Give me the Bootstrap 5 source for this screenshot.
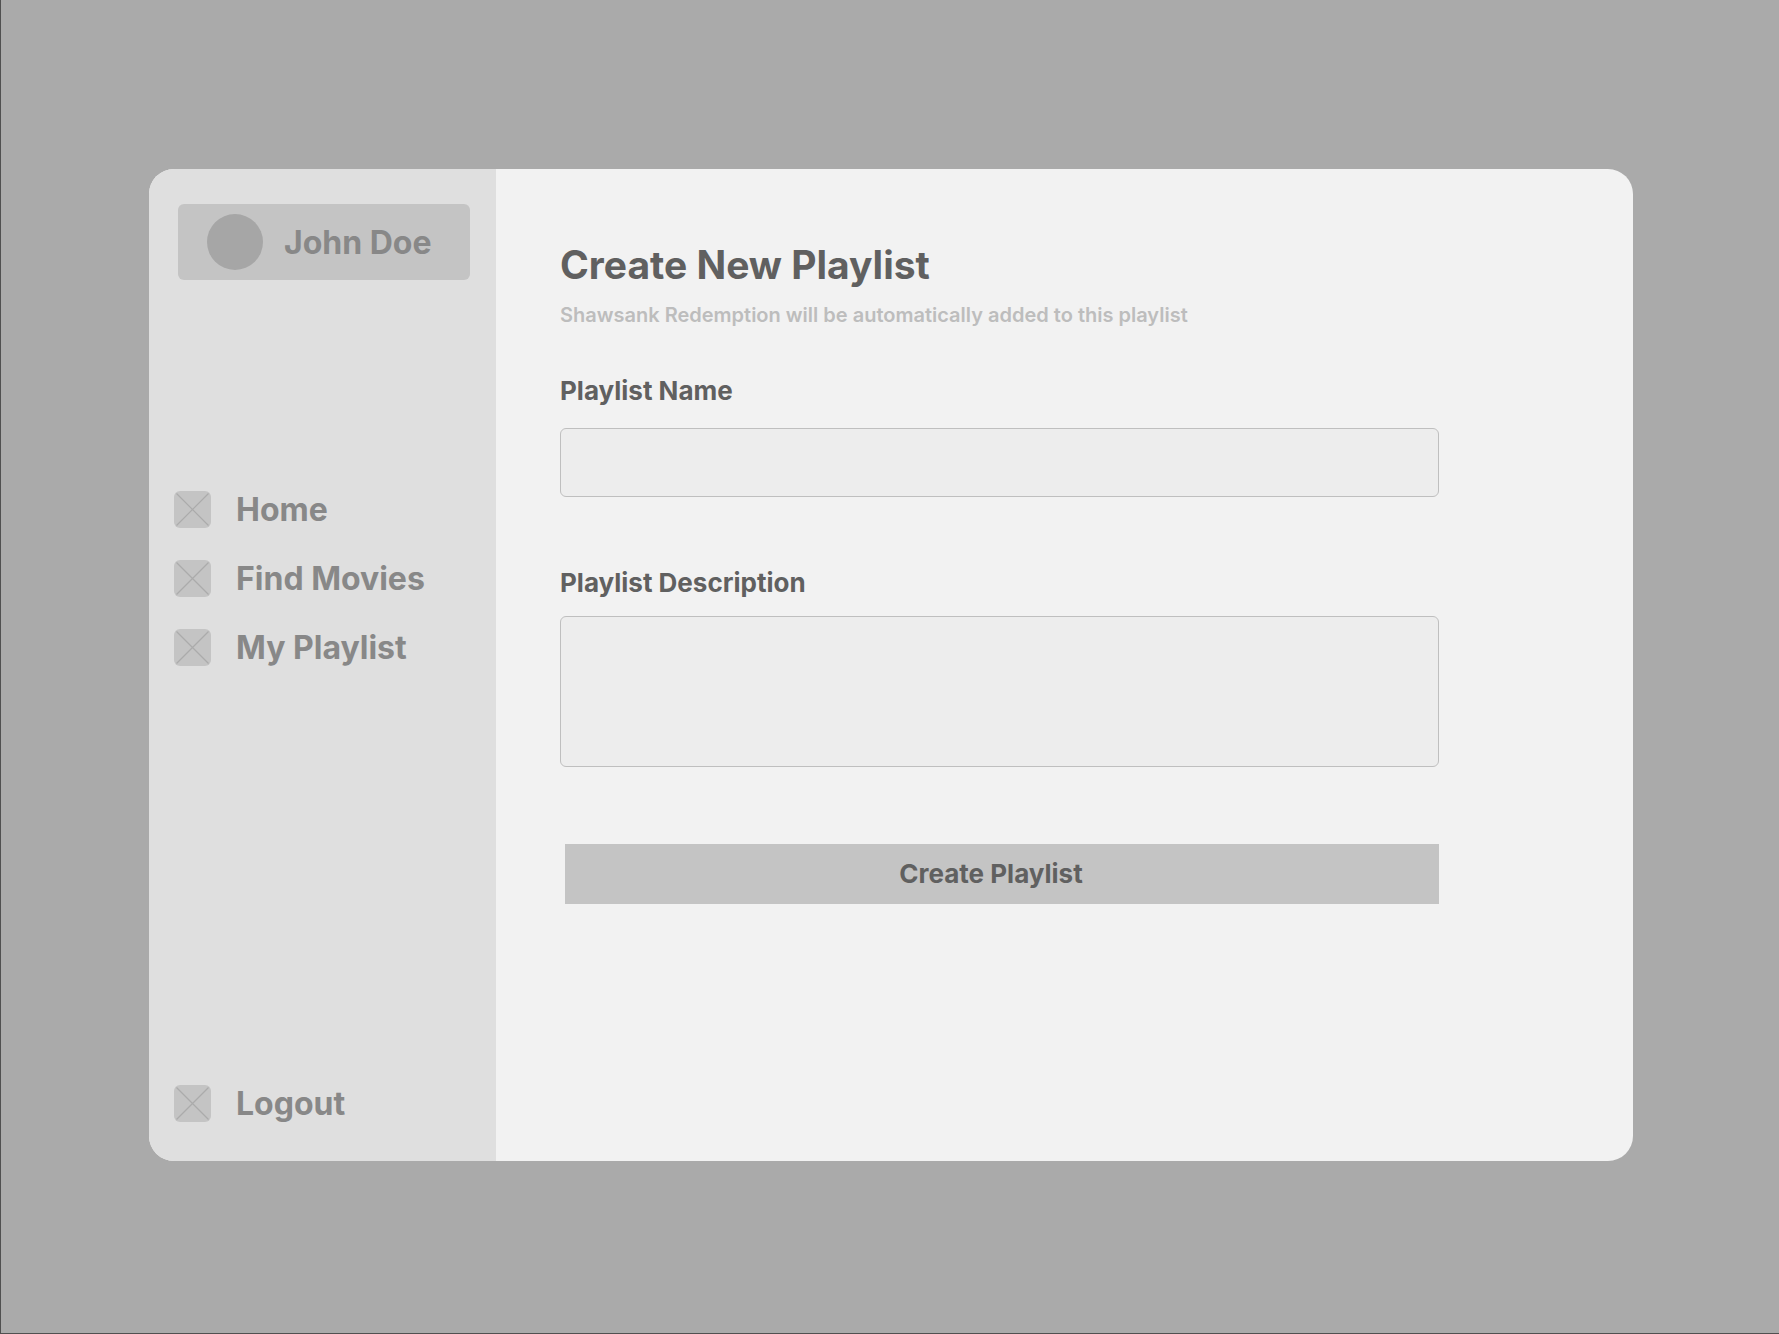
<!DOCTYPE html>
<html lang="en">
<head>
<meta charset="utf-8">
<meta name="viewport" content="width=device-width, initial-scale=1">
<title>Create New Playlist</title>
<link href="https://cdn.jsdelivr.net/npm/bootstrap@5.3.0/dist/css/bootstrap.min.css" rel="stylesheet">
<style>
  body {
    font-family: Inter, "Open Sans", sans-serif;
    font-weight: 700;
    color: #606060;
    background: #aaa;
    border-left: 1px solid #505050;
    border-bottom: 1px solid #505050;
    padding: 169px 146px 172px 148px;
  }
  .app-shell { background: #f2f2f2; border-radius: 25px; }
  .app-side {
    width: 347px;
    background: #dfdfdf;
    color: #888;
    font-size: 32px;
    line-height: 37px;
    padding: 35px 26px 39px 25px;
  }
  .app-side a { color: inherit; gap: 25px; }
  .user-box {
    height: 76px;
    margin-left: 4px;
    margin-bottom: 211px;
    padding: 0 29px;
    gap: 21px;
    background: #c4c4c4;
    border-radius: 6px;
  }
  .user-face { width: 56px; height: 56px; background: #a6a6a6; }
  .side-links { gap: 32px; }
  .side-icon { width: 37px; height: 37px; }
  .app-main { padding: 74px 194px 74px 64px; }
  .app-title { font-size: 39px; line-height: 44px; font-weight: 700; margin-bottom: 16px; }
  .app-note { font-size: 20px; line-height: 24px; font-weight: 600; color: #bdbdbd; margin-bottom: 49px; }
  .field-label { font-size: 26px; line-height: 30px; }
  .name-label { margin-bottom: 22px; }
  .text-label { margin-bottom: 18px; }
  .field-box, .field-box:focus {
    background: #ededed;
    border: 1px solid #bfbfbf;
    border-radius: 6px;
    color: #606060;
    font-size: 26px;
    resize: none;
  }
  .field-name { height: 69px; margin-bottom: 71px; }
  .field-text { height: 151px; margin-bottom: 77px; }
  .create-btn {
    height: 60px;
    margin-left: 5px;
    padding-right: 34px;
    background: #c4c4c4;
    color: #606060;
    font-size: 26px;
    line-height: 30px;
    font-weight: 700;
  }
</style>
<script src="https://cdn.jsdelivr.net/npm/bootstrap@5.3.0/dist/js/bootstrap.bundle.min.js"></script>
</head>
<body class="min-vh-100 d-flex">
<svg class="d-none">
  <symbol id="box" viewBox="0 0 37 37">
    <rect width="37" height="37" rx="6" fill="#c4c4c4"/>
    <path d="M2.500 2.500L34.500 34.500M34.500 2.500L2.500 34.500" stroke="#ababab" stroke-width="1.2"/>
  </symbol>
</svg>
<div class="app-shell d-flex flex-grow-1 overflow-hidden">
  <aside class="app-side d-flex flex-column flex-shrink-0">
    <div class="user-box d-flex align-items-center">
      <span class="user-face rounded-circle flex-shrink-0"></span>
      <span class="text-nowrap">John Doe</span>
    </div>
    <nav class="side-links d-flex flex-column">
      <a href="#" class="d-flex align-items-center text-decoration-none"><svg class="side-icon"><use href="#box"/></svg>Home</a>
      <a href="#" class="d-flex align-items-center text-decoration-none"><svg class="side-icon"><use href="#box"/></svg>Find Movies</a>
      <a href="#" class="d-flex align-items-center text-decoration-none"><svg class="side-icon"><use href="#box"/></svg>My Playlist</a>
    </nav>
    <a href="#" class="d-flex align-items-center text-decoration-none mt-auto"><svg class="side-icon"><use href="#box"/></svg>Logout</a>
  </aside>
  <main class="app-main flex-grow-1">
    <h1 class="app-title">Create New Playlist</h1>
    <p class="app-note">Shawsank Redemption will be automatically added to this playlist</p>
    <form class="d-flex flex-column">
      <label class="field-label name-label" for="name">Playlist Name</label>
      <input class="form-control field-box field-name" id="name" type="text">
      <label class="field-label text-label" for="desc">Playlist Description</label>
      <textarea class="form-control field-box field-text" id="desc"></textarea>
      <button class="btn create-btn rounded-0 border-0" type="button">Create Playlist</button>
    </form>
  </main>
</div>
</body>
</html>
